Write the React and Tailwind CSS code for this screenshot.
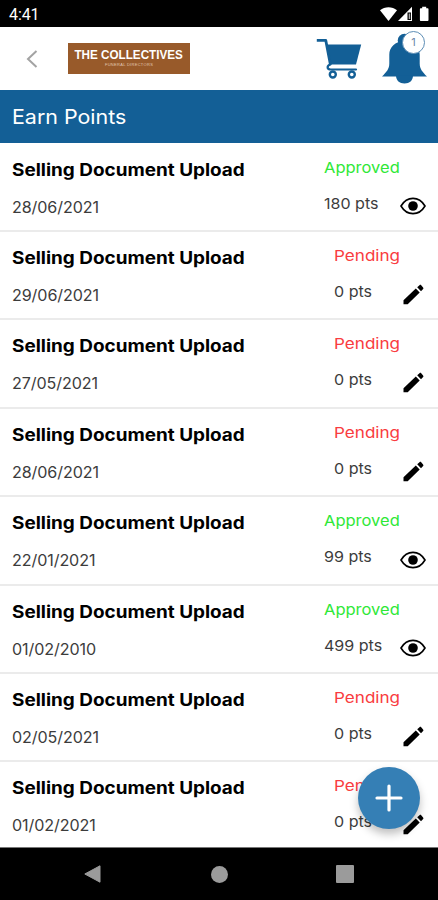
const entries = [
  { date: "28/06/2021", status: "Approved", points: "180 pts" },
  { date: "29/06/2021", status: "Pending", points: "0 pts" },
  { date: "27/05/2021", status: "Pending", points: "0 pts" },
  { date: "28/06/2021", status: "Pending", points: "0 pts" },
  { date: "22/01/2021", status: "Approved", points: "99 pts" },
  { date: "01/02/2010", status: "Approved", points: "499 pts" },
  { date: "02/05/2021", status: "Pending", points: "0 pts" },
  { date: "01/02/2021", status: "Pending", points: "0 pts" },
];

function StatusBar() {
  return (
    <div className="flex h-[27px] shrink-0 items-center justify-between bg-black pr-2 pl-[9px] text-white">
      <span className="pt-0.5 font-['Roboto'] text-[16px] leading-none tracking-[-0.1px]">4:41</span>
      <svg className="h-4 w-[51px]" viewBox="0 0 51 16" fill="currentColor">
        <path d="M1 4.200C5.800.2 13.200.2 18 4.200L9.500 15z" />
        <path d="M33 .8V15H19z" />
        <path d="M28.500 6.500h3.500V14h-3.500z" fill="#000" />
        <path d="M29.700 7.500h1.500v5.500h-1.500z" fill="#aaa" />
        <path d="M43.200.8h4v1.500h1.500c.5 0 .8.300.8.800v11c0 .5-.3.900-.8.900h-7c-.5 0-.8-.4-.8-.9v-11c0-.5.3-.8.800-.8h1.500z" />
      </svg>
    </div>
  );
}

function CartIcon() {
  return (
    <svg className="h-[41px] w-[46px]" viewBox="0 0 46 41" fill="none" stroke="#135f96">
      <path d="M11.200 6.500h34l-5.200 20H14.500z" fill="#135f96" stroke="none" />
      <path d="M.8 2.400h9l4.600 24.100" strokeWidth="2.800" strokeLinejoin="round" />
      <path d="M14.500 26.500c-4 1-3.700 5 .2 5H40" strokeWidth="2.200" strokeLinecap="round" />
      <circle cx="16.800" cy="36.500" r="3" strokeWidth="2.400" />
      <circle cx="35.800" cy="36.500" r="3" strokeWidth="2.400" />
    </svg>
  );
}

function BellIcon() {
  return (
    <svg className="h-[51px] w-[45px]" viewBox="0 0 45 51" fill="#135f96">
      <circle cx="22.500" cy="7.500" r="6.800" />
      <path d="M22.500 8C13 8 7.300 14.500 7.300 21.500v9C7.300 36 4.500 39 0 43.500h45c-4.500-4.500-7.300-7.500-7.300-13v-9C37.700 14.500 32 8 22.500 8z" />
      <path d="M14 42.500h17c0 5-3.500 8-8.500 8s-8.500-3-8.500-8z" />
    </svg>
  );
}

function Header() {
  return (
    <header className="flex h-[63px] shrink-0 items-center bg-white">
      <svg className="ml-[26px] h-[18px] w-3" viewBox="0 0 12 18" fill="none" stroke="#a3a3a3" strokeWidth="2">
        <path d="M10.500 1 2 9l8.500 8" />
      </svg>
      <div className="ml-[30px] flex h-[31px] w-[122px] flex-col items-center bg-[#985a2a] pt-[5px] whitespace-nowrap text-white">
        <span className="scale-x-[0.865] font-['Liberation_Sans'] text-[13.500px] leading-[13px] font-bold">THE COLLECTIVES</span>
        <span className="font-['Liberation_Sans'] text-[4px] leading-[7px] tracking-[0.3px] text-[#e2c8b2]">FUNERAL DIRECTORS</span>
      </div>
      <div className="ml-auto flex items-center pr-[11px]">
        <div className="mr-[20px]">
          <CartIcon />
        </div>
        <div className="relative">
          <BellIcon />
          <span className="absolute -top-[2px] left-[20px] grid h-[23px] w-[23px] place-items-center rounded-full border border-[#5c8db5] bg-white font-['Inter'] text-[11px] text-[#6b86a8]">
            1
          </span>
        </div>
      </div>
    </header>
  );
}

function EyeIcon() {
  return (
    <svg className="h-[18px] w-[26px]" viewBox="0 0 26 18" fill="none" stroke="#000">
      <path d="M1 9C7-1.200 19-1.200 25 9 19 19.200 7 19.200 1 9z" strokeWidth="1.600" />
      <circle cx="13" cy="9" r="4.800" fill="#000" stroke="none" />
    </svg>
  );
}

function PencilIcon() {
  return (
    <svg className="h-[21px] w-[21px]" viewBox="0 0 21 21">
      <path d="M.5 16.200 12.800 4.600l3.900 4L4.700 20.200H.5zM14.200 3.300 16.500 1.200c.6-.5 1.200-.5 1.700 0l1.900 2.200c.5.600.5 1.200 0 1.700L18 7.300z" />
    </svg>
  );
}

function EntryRow({ entry }) {
  const approved = entry.status === "Approved";

  return (
    <li className="flex h-[88.400px] shrink-0 border-b-2 border-[#ebebeb] pl-3">
      <div className="flex-1 pt-[14px]">
        <h2 className="origin-left scale-x-[1.113] text-[17px] leading-6 font-bold whitespace-nowrap text-black">
          Selling Document Upload
        </h2>
        <p className="mt-[14px] origin-left scale-x-[1.04] text-[15.500px] leading-6 tracking-[-0.1px] text-[#3c3c3c]">{entry.date}</p>
      </div>
      <div className={`pt-3 whitespace-nowrap ${approved ? "w-[76.500px]" : "w-[66.500px]"}`}>
        <p
          className={`origin-left text-[15px] leading-6 ${
            approved ? "scale-x-[1.1] text-[#2fe838]" : "scale-x-[1.14] text-[#f93c40]"
          }`}
        >
          {entry.status}
        </p>
        <p className="mt-3 origin-left scale-x-[1.07] text-[15px] leading-6 text-[#3c3c3c]">{entry.points}</p>
      </div>
      <div className="mt-[50px] flex h-[25px] w-[38px] items-center justify-center self-start pr-3">
        {approved ? <EyeIcon /> : <PencilIcon />}
      </div>
    </li>
  );
}

function NavBar() {
  return (
    <nav className="flex h-[53px] shrink-0 items-center justify-between border-t border-[#777] bg-black px-[84px]">
      <svg className="h-[18px] w-[17px]" viewBox="0 0 17 18" fill="#9b9b9b">
        <path d="M16 .8v16.400L.8 9z" stroke="#9b9b9b" strokeLinejoin="round" />
      </svg>
      <span className="ml-[2px] h-[17px] w-[17px] rounded-full bg-[#9b9b9b]" />
      <span className="h-[18px] w-[18px] rounded-[1px] bg-[#9b9b9b]" />
    </nav>
  );
}

export default function App() {
  return (
    <div className="relative flex h-[900px] w-[438px] flex-col overflow-hidden bg-white font-['Inter',sans-serif]">
      <StatusBar />
      <Header />
      <div className="flex h-[53px] shrink-0 items-center bg-[#135f96] pl-3">
        <h1 className="origin-left scale-x-[1.07] text-[20px] text-white">Earn Points</h1>
      </div>
      <ul className="flex min-h-0 flex-1 flex-col overflow-hidden pt-[0.600px]">
        {entries.map((entry, i) => (
          <EntryRow key={i} entry={entry} />
        ))}
      </ul>
      <NavBar />
      <button className="absolute right-[18px] bottom-[71px] grid h-[62px] w-[62px] place-items-center rounded-full bg-[#357fb5] shadow-[0_5px_8px_rgba(0,0,0,0.25)]">
        <svg className="h-7 w-7" viewBox="0 0 28 28" stroke="#fff" strokeWidth="3.200" strokeLinecap="round">
          <path d="M14 2v24M2 14h24" />
        </svg>
      </button>
    </div>
  );
}
